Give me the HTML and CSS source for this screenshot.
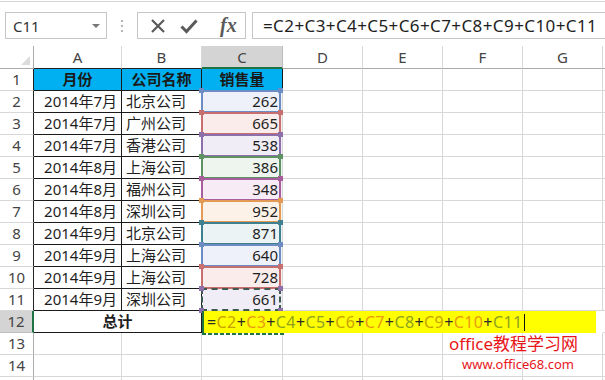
FILE: index.html
```html
<!DOCTYPE html>
<html lang="zh-CN">
<head>
<meta charset="utf-8">
<title>Excel</title>
<link rel="stylesheet" href="styles.css">
</head>
<body>
<div class="topline"></div>
<div class="fbar">
  <div class="namebox"><span>C11</span><span class="arrow"></span></div>
  <div class="dots"><i></i><i></i><i></i></div>
  <div class="btns">
    <svg class="ic-x" width="16" height="16" viewBox="0 0 16 16"><path d="M2 2 L14 14 M14 2 L2 14" stroke="#5a5a5a" stroke-width="2.2" fill="none"/></svg>
    <svg class="ic-ok" width="18" height="16" viewBox="0 0 18 16"><path d="M1.5 8.5 L6.5 13.5 L16.5 2.5" stroke="#5a5a5a" stroke-width="3" fill="none"/></svg>
    <span class="fx">fx</span>
  </div>
  <div class="formula">=C2+C3+C4+C5+C6+C7+C8+C9+C10+C11</div>
</div>

<div class="sheet">
  <div class="ch corner"><span class="tri"></span></div>
  <div class="ch blk">A</div>
  <div class="ch blk">B</div>
  <div class="ch sel">C</div>
  <div class="ch">D</div>
  <div class="ch">E</div>
  <div class="ch">F</div>
  <div class="ch">G</div>
  <div class="ch"></div>

  <div class="rh tb">1</div>
  <div class="c t hd">月份</div>
  <div class="c t hd">公司名称</div>
  <div class="c t hd">销售量</div>
  <div class="c"></div><div class="c"></div><div class="c"></div><div class="c"></div><div class="c"></div>

  <div class="rh tb">2</div>
  <div class="c t num">2014年7月</div>
  <div class="c t">北京公司</div>
  <div class="c num r1"><span class="ref"></span>262</div>
  <div class="c"></div><div class="c"></div><div class="c"></div><div class="c"></div><div class="c"></div>

  <div class="rh tb">3</div>
  <div class="c t num">2014年7月</div>
  <div class="c t">广州公司</div>
  <div class="c num r2"><span class="ref"></span>665</div>
  <div class="c"></div><div class="c"></div><div class="c"></div><div class="c"></div><div class="c"></div>

  <div class="rh tb">4</div>
  <div class="c t num">2014年7月</div>
  <div class="c t">香港公司</div>
  <div class="c num r3"><span class="ref"></span>538</div>
  <div class="c"></div><div class="c"></div><div class="c"></div><div class="c"></div><div class="c"></div>

  <div class="rh tb">5</div>
  <div class="c t num">2014年8月</div>
  <div class="c t">上海公司</div>
  <div class="c num r4"><span class="ref"></span>386</div>
  <div class="c"></div><div class="c"></div><div class="c"></div><div class="c"></div><div class="c"></div>

  <div class="rh tb">6</div>
  <div class="c t num">2014年8月</div>
  <div class="c t">福州公司</div>
  <div class="c num r5"><span class="ref"></span>348</div>
  <div class="c"></div><div class="c"></div><div class="c"></div><div class="c"></div><div class="c"></div>

  <div class="rh tb">7</div>
  <div class="c t num">2014年8月</div>
  <div class="c t">深圳公司</div>
  <div class="c num r6"><span class="ref"></span>952</div>
  <div class="c"></div><div class="c"></div><div class="c"></div><div class="c"></div><div class="c"></div>

  <div class="rh tb">8</div>
  <div class="c t num">2014年9月</div>
  <div class="c t">北京公司</div>
  <div class="c num r7"><span class="ref"></span>871</div>
  <div class="c"></div><div class="c"></div><div class="c"></div><div class="c"></div><div class="c"></div>

  <div class="rh tb">9</div>
  <div class="c t num">2014年9月</div>
  <div class="c t">上海公司</div>
  <div class="c num r1"><span class="ref"></span>640</div>
  <div class="c"></div><div class="c"></div><div class="c"></div><div class="c"></div><div class="c"></div>

  <div class="rh tb">10</div>
  <div class="c t num">2014年9月</div>
  <div class="c t">上海公司</div>
  <div class="c num r2"><span class="ref"></span>728</div>
  <div class="c"></div><div class="c"></div><div class="c"></div><div class="c"></div><div class="c"></div>

  <div class="rh tb">11</div>
  <div class="c t num">2014年9月</div>
  <div class="c t">深圳公司</div>
  <div class="c num r3 ants"><span class="ref"></span>661</div>
  <div class="c"></div><div class="c"></div><div class="c"></div><div class="c"></div><div class="c"></div>

  <div class="rh rsel">12</div>
  <div class="c t total">总计</div>
  <div class="c edit">
    <div class="editbox"><span class="eq">=</span><span class="k1">C2</span>+<span class="k2">C3</span>+<span class="k3">C4</span>+<span class="k3">C5</span>+<span class="k1">C6</span>+<span class="k2">C7</span>+<span class="k3">C8</span>+<span class="k1">C9</span>+<span class="k2">C10</span>+<span class="k3">C11</span><span class="caret"></span></div>
  </div>
  <div class="c"></div>

  <div class="rh">13</div>
  <div class="c"></div><div class="c"></div><div class="c"></div><div class="c"></div><div class="c"></div><div class="c"></div><div class="c"></div><div class="c"></div>

  <div class="rh">14</div>
  <div class="c"></div><div class="c"></div><div class="c"></div><div class="c"></div><div class="c"></div><div class="c"></div><div class="c"></div><div class="c"></div>

  <div class="rh"></div>
  <div class="c"></div><div class="c"></div><div class="c"></div><div class="c"></div><div class="c"></div><div class="c"></div><div class="c"></div><div class="c"></div>
</div>

<div class="watermark">
  <div class="wm1">office教程学习网</div>
  <div class="wm2">www.office68.com</div>
</div>
</body>
</html>
```

FILE: styles.css
```css
html, body {
  margin: 0;
  padding: 0;
}
body {
  width: 605px;
  height: 380px;
  overflow: hidden;
  position: relative;
  background: #fff;
  color: #1e1e1e;
  font-family: "Noto Sans", "Noto Sans CJK SC", sans-serif;
}

.topline {
  height: 1px;
  margin-top: 1px;
  background: #d6d6d6;
}

/* formula bar */
.fbar {
  display: flex;
  height: 27px;
  margin-top: 10px;
}
.namebox {
  box-sizing: border-box;
  width: 102px;
  margin-left: 5px;
  border: 1px solid #c6c6c6;
  display: flex;
  align-items: center;
  justify-content: space-between;
  padding: 0 6px 0 7px;
  font-size: 15px;
  color: #333;
}
.arrow {
  width: 0;
  height: 0;
  border-left: 4px solid transparent;
  border-right: 4px solid transparent;
  border-top: 4px solid #777;
}
.dots {
  width: 30px;
  display: flex;
  flex-direction: column;
  align-items: center;
  justify-content: center;
  gap: 3px;
}
.dots i {
  display: block;
  width: 2px;
  height: 2px;
  background: #b5b5b5;
}
.btns {
  box-sizing: border-box;
  width: 109px;
  border: 1px solid #c6c6c6;
  display: flex;
  align-items: center;
  padding-left: 12px;
}
.ic-ok {
  margin-left: 14px;
}
.fx {
  margin-left: 22px;
  font-family: "Liberation Serif", serif;
  font-style: italic;
  font-weight: bold;
  font-size: 20px;
  color: #5a5a5a;
  line-height: 25px;
}
.formula {
  flex: 1;
  margin-left: 6px;
  border: 1px solid #c6c6c6;
  border-right: none;
  padding-left: 10px;
  font-size: 17px;
  letter-spacing: 0.4px;
  line-height: 25px;
  color: #1e1e1e;
  white-space: nowrap;
}

/* sheet */
.sheet {
  margin-top: 7px;
  display: grid;
  grid-template-columns: 34px 88px 80px 81px 80px 80px 80px 80px 1fr;
  grid-template-rows: 23px;
  grid-auto-rows: 22px;
  font-size: 15px;
}
.ch {
  box-sizing: border-box;
  border-right: 1px solid #d8d8d8;
  border-bottom: 1px solid #ababab;
  text-align: center;
  line-height: 22px;
  color: #444;
  font-size: 15px;
}
.ch.blk {
  border-bottom-color: #222;
}
.ch.sel {
  background: #d4d4d4;
  border-bottom: 2px solid #217346;
  border-right-color: #bdbdbd;
}
.corner {
  position: relative;
  border-right-color: #ababab;
}
.tri {
  position: absolute;
  right: 3px;
  bottom: 3px;
  width: 0;
  height: 0;
  border-left: 9px solid transparent;
  border-bottom: 9px solid #dcdcdc;
}
.rh {
  box-sizing: border-box;
  border-right: 1px solid #ababab;
  border-bottom: 1px solid #d8d8d8;
  text-align: center;
  line-height: 21px;
  color: #444;
  font-size: 15px;
}
.rh.tb {
  border-right-color: #222;
}
.rh.rsel {
  background: #d4d4d4;
  border-right: 2px solid #217346;
  border-bottom-color: #bdbdbd;
}
.c {
  box-sizing: border-box;
  border-right: 1px solid #d8d8d8;
  border-bottom: 1px solid #d8d8d8;
  line-height: 21px;
  padding: 0 4px;
  white-space: nowrap;
  position: relative;
}
.c.t {
  border-right-color: #1a1a1a;
  border-bottom-color: #1a1a1a;
}
.c.hd {
  background: #00b0f0;
  font-weight: bold;
  text-align: center;
  color: #1a1a1a;
}
.c.num {
  text-align: right;
}
.c.total {
  grid-column: span 2;
  text-align: center;
  font-weight: bold;
}

/* reference boxes in column C */
.r1 { background: #eef1fa; --rc: #6e8cc4; }
.r2 { background: #fbecec; --rc: #c76f6f; }
.r3 { background: #f1edf6; --rc: #8c6fab; }
.r4 { background: #edf5ee; --rc: #5e9262; }
.r5 { background: #f7ecf5; --rc: #a85d9c; }
.r6 { background: #fdf2e7; --rc: #e29a55; }
.r7 { background: #ebf3f5; --rc: #3e8090; }
.ref {
  position: absolute;
  top: -1px;
  bottom: -1px;
  left: -1px;
  right: 1px;
  border: 2px solid var(--rc);
  color: var(--rc);
  z-index: 1;
}
.ref::before {
  content: "";
  position: absolute;
  left: -4px;
  top: -4px;
  width: 5px;
  height: 5px;
  background: currentColor;
  box-shadow: 79px 0 0 currentColor, 0 22px 0 currentColor, 79px 22px 0 currentColor;
}
.ants .ref {
  border: 2px dashed #3e5a50;
}

/* editing cell C12 */
.c.edit {
  grid-column: span 5;
  padding: 0;
  border-right: none;
  border-bottom: none;
}
.editbox {
  box-sizing: border-box;
  width: 394px;
  height: 22px;
  background: #ffff00;
  border-left: 2px solid #217346;
  padding-left: 3px;
  font-size: 16px;
  letter-spacing: 0.4px;
  line-height: 22px;
  color: #2a2a2a;
  position: relative;
  z-index: 2;
}
.editbox::after {
  content: "";
  position: absolute;
  left: -2px;
  bottom: -2px;
  width: 82px;
  height: 2px;
  background: repeating-linear-gradient(90deg, #217346 0 4px, transparent 4px 6px);
}
.k1 { color: #c9a100; }
.k2 { color: #e79a12; }
.k3 { color: #8fa21e; }
.caret {
  display: inline-block;
  width: 1px;
  height: 17px;
  background: #111;
  vertical-align: -3px;
  margin-left: 1px;
}

/* watermark */
.watermark {
  position: absolute;
  left: 449px;
  top: 335px;
  color: #e8161b;
  line-height: 1;
}
.wm1 {
  font-size: 17px;
}
.wm2 {
  margin-top: 6px;
  margin-left: 13px;
  font-size: 13px;
}
```
